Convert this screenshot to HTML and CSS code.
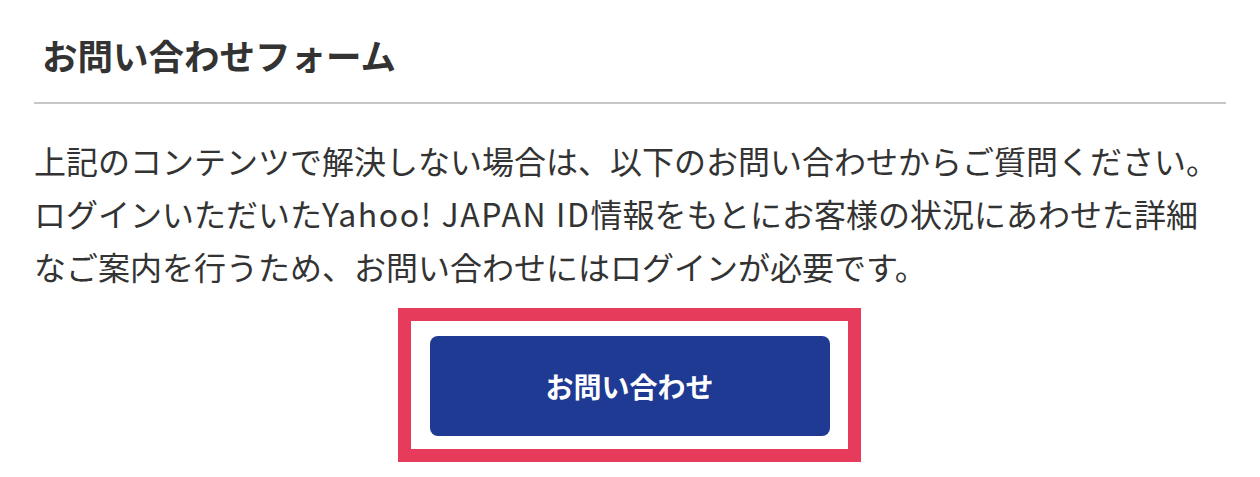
FILE: index.html
```html
<!DOCTYPE html>
<html lang="ja">
<head>
<meta charset="utf-8">
<title>お問い合わせフォーム</title>
<link rel="stylesheet" href="styles.css">
</head>
<body>
<section class="contact">
  <h2 class="contact-title">お問い合わせフォーム</h2>
  <p class="contact-text">上記のコンテンツで解決しない場合は、以下のお問い合わせからご質問ください。<br>ログインいただいた<span class="latin">Yahoo! JAPAN ID</span>情報をもとにお客様の状況にあわせた詳細<br>なご案内を行うため、お問い合わせにはログインが必要です。</p>
  <div class="contact-action">
    <div class="highlight">
      <a class="contact-button" href="#">お問い合わせ</a>
    </div>
  </div>
</section>
</body>
</html>
```

FILE: styles.css
```css
html, body {
  margin: 0;
  padding: 0;
  background: #fff;
}
body {
  font-family: "Noto Sans CJK JP", "Noto Sans", sans-serif;
  color: #333;
}
.contact {
  width: 1192px;
  margin-left: 34px;
  padding-top: 28px;
}
.contact-title {
  margin: 0;
  padding: 0 0 20px 8px;
  font-size: 35.5px;
  line-height: 54px;
  font-weight: 700;
  color: #333;
  border-bottom: 2px solid #c8c8c8;
}
.contact-text {
  margin: 30px 0 0;
  font-size: 32px;
  line-height: 53px;
  color: #333;
}
.latin {
  letter-spacing: 1.6px;
}
.contact-action {
  display: flex;
  justify-content: center;
  margin-top: 15px;
  margin-left: -2px;
}
.highlight {
  border: 13px solid #e63b5a;
  padding: 15px 18px 13px 19px;
}
.contact-button {
  display: flex;
  align-items: center;
  justify-content: center;
  width: 400px;
  height: 100px;
  border-radius: 8px;
  background: #1f3a93;
  color: #fff;
  font-size: 28px;
  font-weight: 700;
  text-decoration: none;
}
```
